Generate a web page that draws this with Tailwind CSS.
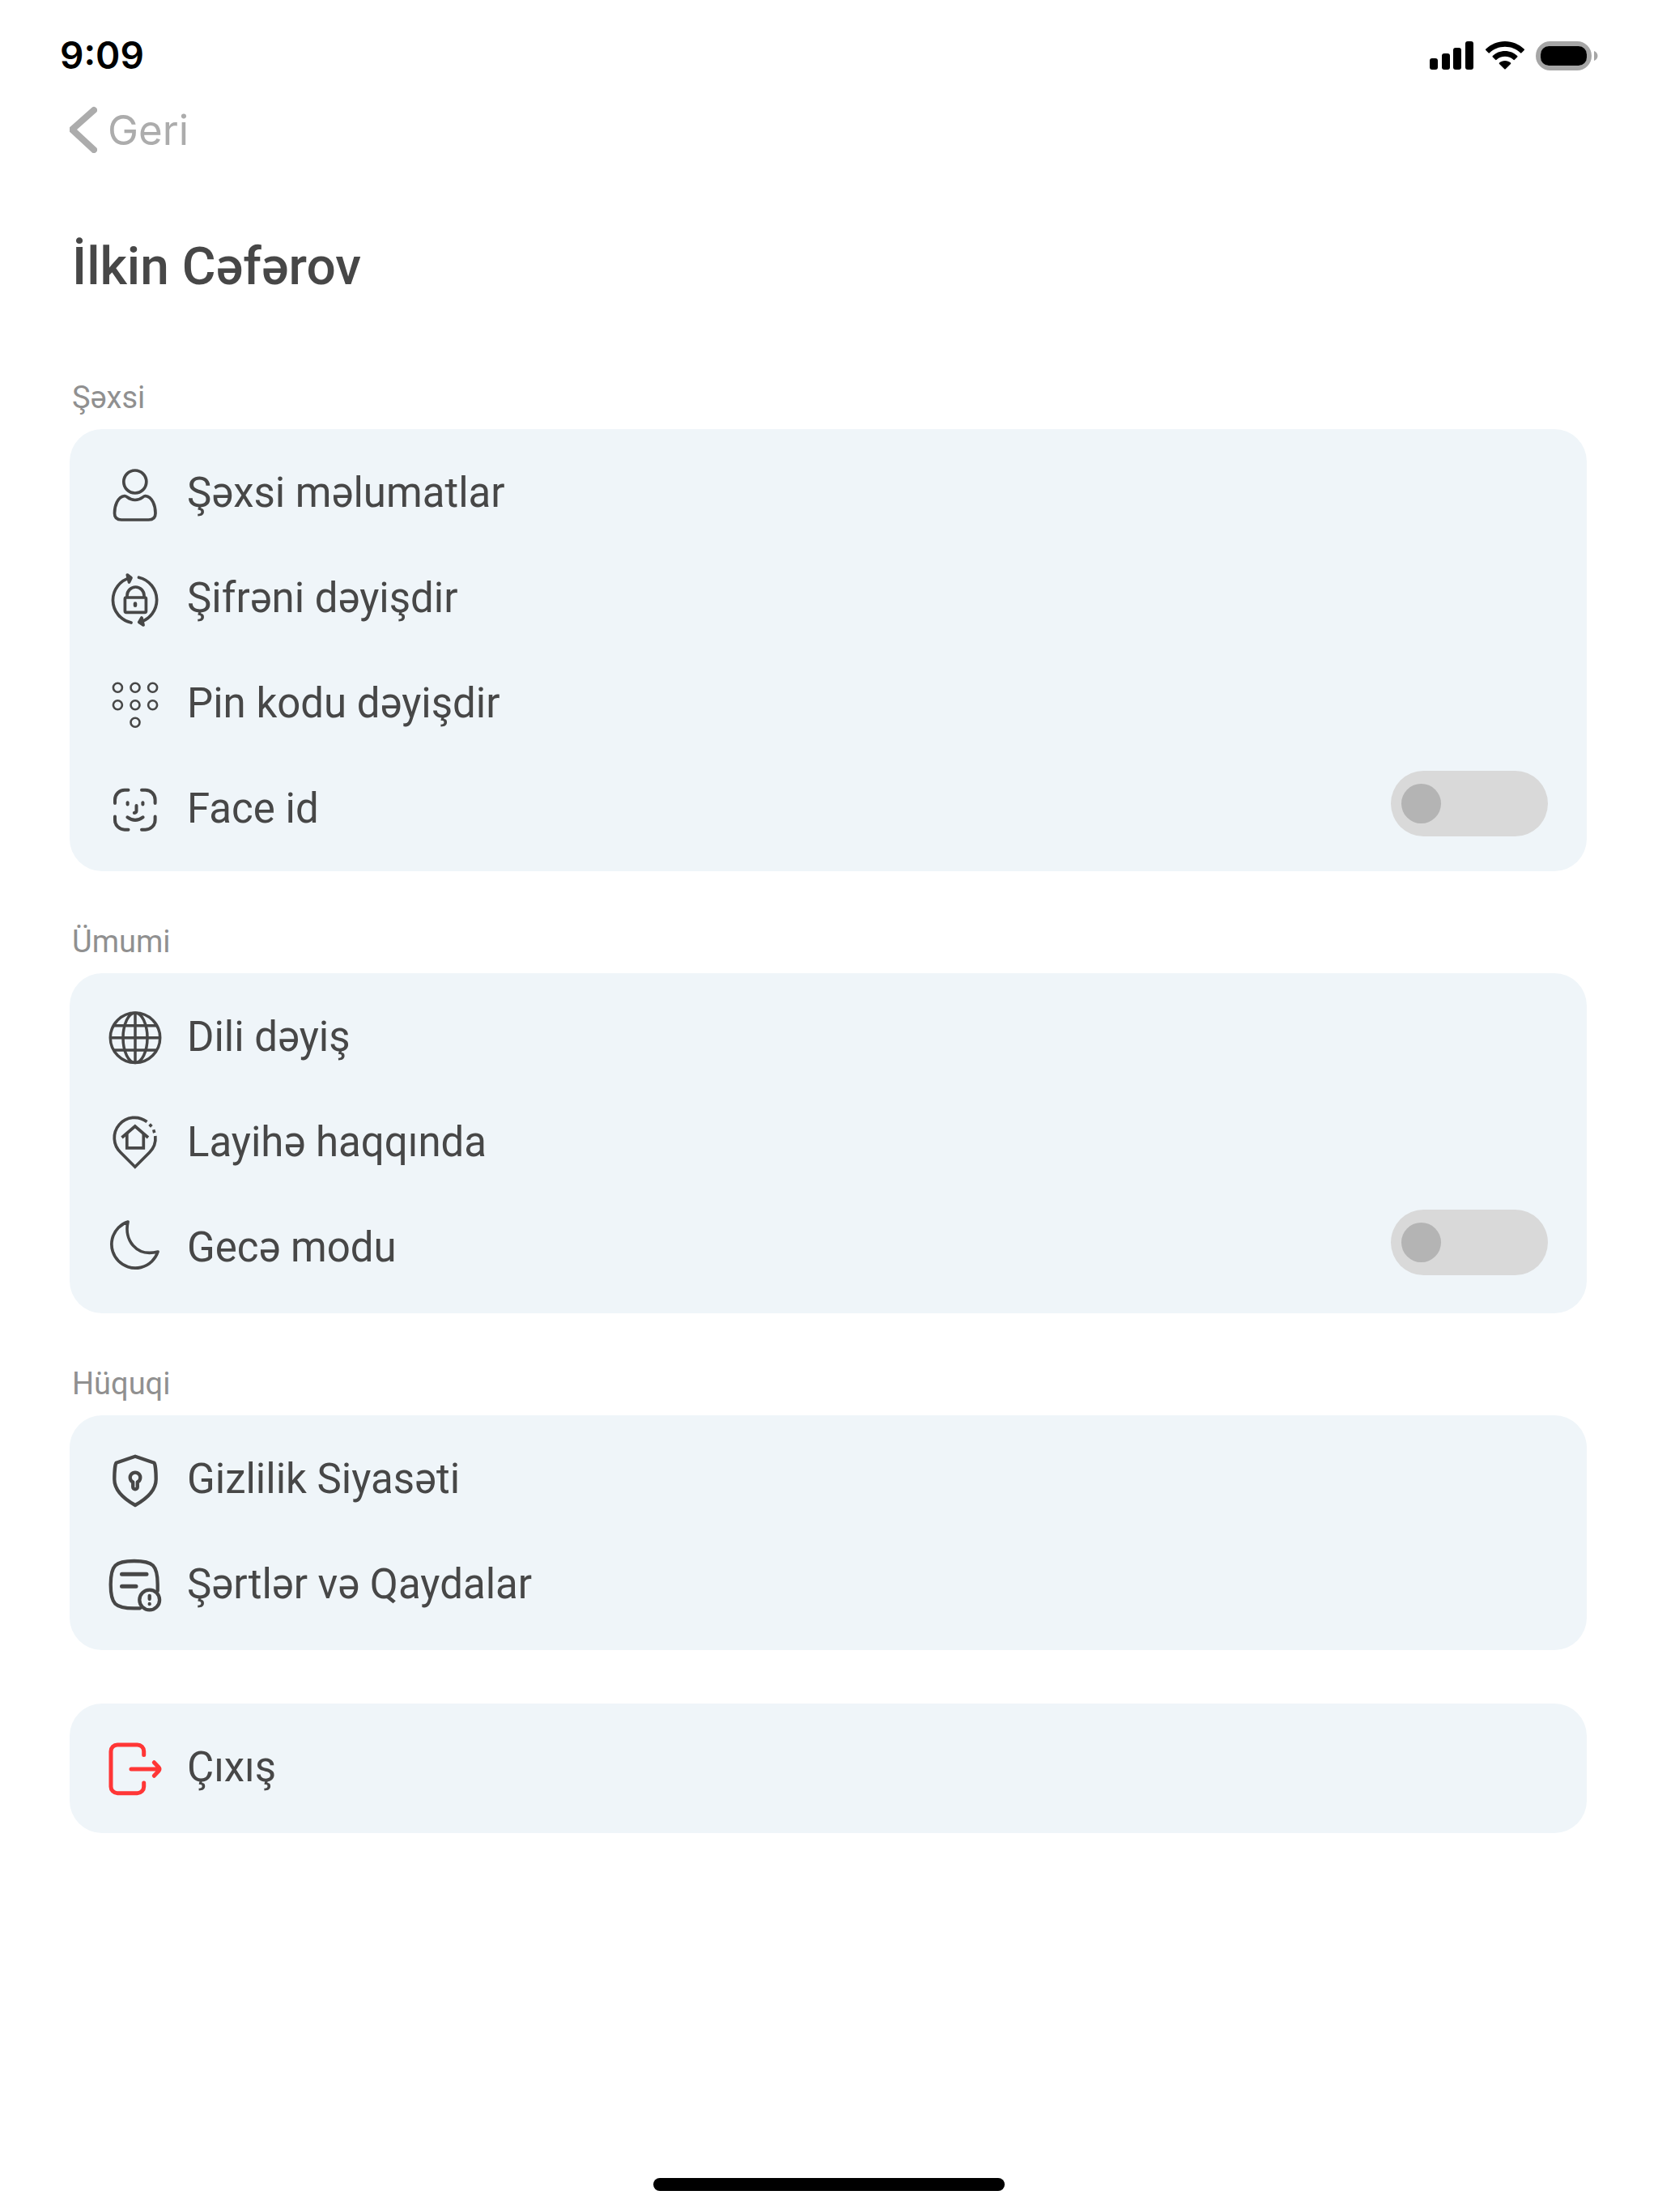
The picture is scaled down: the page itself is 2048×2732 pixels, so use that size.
<!DOCTYPE html>
<html lang="az">
<head>
    <meta charset="UTF-8">
    <meta name="viewport" content="width=device-width, initial-scale=1.0">
    <title>Profil</title>
    <script src="https://cdn.jsdelivr.net/npm/@tailwindcss/browser@4"></script>
</head>
<body class="bg-white font-[Roboto,sans-serif] text-[#474747]">
<div class="min-h-screen flex flex-col">

    <!-- Status bar -->
    <header class="h-[120px] pt-4 pl-[74px] pr-[74px] flex items-center justify-between text-black">
        <span class="font-[Inter,sans-serif] font-semibold text-[46px] leading-[56px]">9:09</span>
        <div class="flex items-center gap-[14px] pt-[2px]">
            <svg class="w-[55px] h-[36px]" viewBox="0 0 55 36" fill="currentColor">
                <rect x="0" y="21" width="10" height="14" rx="3"/>
                <rect x="15" y="15" width="10" height="20" rx="3"/>
                <rect x="29" y="8" width="10" height="27" rx="3"/>
                <rect x="44" y="0" width="10" height="35" rx="3"/>
            </svg>
            <svg class="w-[48px] h-[36px]" viewBox="0 0 48 36" fill="currentColor">
                <path d="M24 0C33 0 41.500 3.600 47.600 9.500Q48.400 10.300 47.700 11L44.500 14.300Q43.800 15 43 14.300C38 9.500 31.300 6.800 24 6.800S10 9.500 5 14.300Q4.200 15 3.500 14.300L.300 11Q-.400 10.300 .400 9.500C6.500 3.600 15 0 24 0Z"/>
                <path d="M24 12C30 12 35.300 14.300 39.200 18Q40 18.800 39.200 19.500L35.900 22.800Q35.200 23.500 34.400 22.800C31.700 20.400 28 18.800 24 18.800S16.300 20.400 13.600 22.800Q12.800 23.500 12.100 22.800L8.800 19.500Q8 18.800 8.800 18C12.700 14.300 18 12 24 12Z"/>
                <path d="M24 24C26.700 24 29.200 24.900 31 26.500Q31.700 27.200 31 27.900L24.700 34.200Q24 34.900 23.300 34.200L17 27.900Q16.300 27.200 17 26.500C18.800 24.900 21.300 24 24 24Z"/>
            </svg>
            <svg class="w-[77px] h-[36px]" viewBox="0 0 77 36">
                <rect x="3" y="3" width="63" height="30" rx="15" fill="none" stroke="#a6a6a6" stroke-width="6"/>
                <rect x="6" y="6" width="57" height="24" rx="10" fill="#000"/>
                <path d="M72 12C75 13 76.500 15.500 76.500 18S75 23 72 24Z" fill="#a6a6a6"/>
            </svg>
        </div>
    </header>

    <main class="pl-[86px] pr-[88px]">
        <a href="#" class="h-20 inline-flex items-center gap-[13px] text-[#acacac]">
            <svg class="w-[34px] h-[58px]" viewBox="0 0 34 58" fill="none" stroke="currentColor" stroke-width="8" stroke-linecap="round" stroke-linejoin="round">
                <path d="M30 5L3 29L30 54"/>
            </svg>
            <span class="pt-[2px] font-[Inter,sans-serif] text-[51px] leading-[64px]">Geri</span>
        </a>

        <h1 class="mt-[90px] ml-[3px] font-medium text-[64px] leading-[80px]">İlkin Cəfərov</h1>

        <!-- Şəxsi -->
        <section class="mt-[97px]">
            <h2 class="ml-[3px] mb-[15px] text-[38px] leading-[48px] text-[#909090]">Şəxsi</h2>
            <div class="bg-[#eff5f9] rounded-[40px] px-12 pt-[15px] pb-[11px] text-[51px] leading-[60px]">
                <a href="#" class="h-[130px] flex items-center gap-[31px]">
                    <svg class="w-[66px] h-[66px] overflow-visible" viewBox="0 0 66 66" fill="none" stroke="currentColor" stroke-width="3.700">
                        <circle cx="32.800" cy="18" r="14"/>
                        <path d="M20 35.500C11 36.500 7.500 48 7.500 57C7.500 62.500 10 65 16 65H49.500C55.500 65 58 62.500 58 57C58 48 54.500 36.500 45.500 35.500C42.500 35.500 41 40.500 32.800 40.500S23 35.500 20 35.500Z"/>
                    </svg>
                    <span class="pb-[2px]">Şəxsi məlumatlar</span>
                </a>
                <a href="#" class="h-[130px] flex items-center gap-[31px]">
                    <svg class="w-[66px] h-[66px] overflow-visible" viewBox="0 0 66 66" fill="none" stroke="currentColor" stroke-width="3.700" stroke-linecap="round" stroke-linejoin="round">
                        <path d="M28 62A28.500 28.500 0 0 1 27 6.500"/>
                        <path d="M37.500 6.200A28.500 28.500 0 0 1 38.500 61.500"/>
                        <path d="M23.300 3L28 6.800L25.500 12Z" fill="currentColor"/>
                        <path d="M43 65L37.800 61.500L41 56Z" fill="currentColor"/>
                        <rect x="20.400" y="31" width="26" height="18.300" rx="1.500"/>
                        <path d="M23 30V28.500A10.500 10.500 0 0 1 44 28.500V30"/>
                        <path d="M33 38.500V40.800" stroke-width="4.500"/>
                    </svg>
                    <span class="pb-[2px]">Şifrəni dəyişdir</span>
                </a>
                <a href="#" class="h-[130px] flex items-center gap-[31px]">
                    <svg class="w-[66px] h-[66px] overflow-visible" viewBox="0 0 66 66" fill="none" stroke="currentColor" stroke-width="2.600">
                        <circle cx="11.400" cy="12.300" r="5.500"/>
                        <circle cx="33" cy="12.300" r="5.500"/>
                        <circle cx="54.600" cy="12.300" r="5.500"/>
                        <circle cx="11.400" cy="33.700" r="5.500"/>
                        <circle cx="33" cy="33.700" r="5.500"/>
                        <circle cx="54.600" cy="33.700" r="5.500"/>
                        <circle cx="33" cy="55.300" r="5.500"/>
                    </svg>
                    <span class="pb-[2px]">Pin kodu dəyişdir</span>
                </a>
                <div class="h-[130px] flex items-center gap-[31px]">
                    <svg class="w-[66px] h-[66px] overflow-visible" viewBox="0 0 66 66" fill="none" stroke="currentColor" stroke-width="4" stroke-linecap="round" stroke-linejoin="round">
                        <path d="M24.500 8.700H20A12 12 0 0 0 8 20.700V25"/>
                        <path d="M41 8.700H45.600A12 12 0 0 1 57.600 20.700V25"/>
                        <path d="M24.500 57.700H20A12 12 0 0 1 8 45.700V41.500"/>
                        <path d="M41 57.700H45.600A12 12 0 0 0 57.600 45.700V41.500"/>
                        <path d="M23.600 24.300V26.500"/>
                        <path d="M42.400 24.300V26.500"/>
                        <path d="M34.500 28V34.500Q34.500 36.500 31.800 37"/>
                        <path d="M23.500 42.300Q33 49.500 42.500 42.300"/>
                    </svg>
                    <label for="face-id" class="flex-1 pb-[2px]">Face id</label>
                    <input id="face-id" type="checkbox" class="appearance-none mb-4 w-[194px] h-[81px] pl-[13px] flex items-center rounded-full bg-[#d9d9d9] before:block before:size-[49px] before:rounded-full before:bg-[#b4b4b4]">
                </div>
            </div>
        </section>

        <!-- Ümumi -->
        <section class="mt-[63px]">
            <h2 class="ml-[3px] mb-[15px] text-[38px] leading-[48px] text-[#909090]">Ümumi</h2>
            <div class="bg-[#eff5f9] rounded-[40px] px-12 py-[15px] text-[51px] leading-[60px]">
                <a href="#" class="h-[130px] flex items-center gap-[31px]">
                    <svg class="w-[66px] h-[66px] overflow-visible" viewBox="0 0 66 66" fill="none" stroke="currentColor" stroke-width="3.500">
                        <circle cx="33" cy="32.700" r="30.700"/>
                        <ellipse cx="33" cy="32.700" rx="15" ry="30.700"/>
                        <path d="M33 2V63.500M2.500 32.700H63.500M7 17.700H59M7 48H59"/>
                    </svg>
                    <span class="pb-[2px]">Dili dəyiş</span>
                </a>
                <a href="#" class="h-[130px] flex items-center gap-[31px]">
                    <svg class="w-[66px] h-[66px] overflow-visible" viewBox="0 0 66 66" fill="none" stroke="currentColor" stroke-width="3.700">
                        <path d="M47.500 6.500A25 25 0 0 0 15.100 44.500L32.800 62.200L50.500 44.500A25 25 0 0 0 57.800 24"/>
                        <path d="M52 8.300L54.700 11L52 13.700L49.300 11Z" fill="currentColor" stroke="none"/>
                        <path d="M54 16.800L57.300 15.800L58.500 19.600L55 20.700Z" fill="currentColor" stroke="none"/>
                        <path d="M16.500 26L32.800 12L49 26"/>
                        <path d="M22.800 21V38.800H43.300V21"/>
                    </svg>
                    <span class="pb-[2px]">Layihə haqqında</span>
                </a>
                <div class="h-[130px] flex items-center gap-[31px]">
                    <svg class="w-[66px] h-[66px] overflow-visible" viewBox="0 0 66 66" fill="none" stroke="currentColor" stroke-width="3.700" stroke-linejoin="round">
                        <path d="M24 0A29.300 29.300 0 1 0 61 37C34 44 19 22 24 0Z"/>
                    </svg>
                    <label for="gece-modu" class="flex-1 pb-[2px]">Gecə modu</label>
                    <input id="gece-modu" type="checkbox" class="appearance-none mb-4 w-[194px] h-[81px] pl-[13px] flex items-center rounded-full bg-[#d9d9d9] before:block before:size-[49px] before:rounded-full before:bg-[#b4b4b4]">
                </div>
            </div>
        </section>

        <!-- Hüquqi -->
        <section class="mt-[63px]">
            <h2 class="ml-[3px] mb-[15px] text-[38px] leading-[48px] text-[#909090]">Hüquqi</h2>
            <div class="bg-[#eff5f9] rounded-[40px] px-12 py-[15px] text-[51px] leading-[60px]">
                <a href="#" class="h-[130px] flex items-center gap-[31px]">
                    <svg class="w-[66px] h-[66px] overflow-visible" viewBox="0 0 66 66" fill="none" stroke="currentColor" stroke-width="4.300" stroke-linejoin="round">
                        <path d="M33 3.700L56.500 11.800C57.500 13 58.700 22 58.700 32C58.700 44 50 54.500 33 64C16 54.500 7.300 44 7.300 32C7.300 22 8.500 13 9.500 11.800Z"/>
                        <path d="M30.200 35.500A6.300 6.300 0 1 1 35.800 35.500V41.500A2.800 2.800 0 0 1 30.200 41.500Z"/>
                    </svg>
                    <span class="pb-[2px]">Gizlilik Siyasəti</span>
                </a>
                <a href="#" class="h-[130px] flex items-center gap-[31px]">
                    <svg class="w-[66px] h-[66px] overflow-visible" viewBox="0 0 66 66" fill="none" stroke="currentColor" stroke-width="4.300" stroke-linecap="round">
                        <path d="M60.700 40V32C60.700 8 55 3 31.700 3S2.700 8 2.700 32S8 61.300 31.700 61.300H39"/>
                        <path d="M16.500 19.300H47M16.500 34.300H34" stroke-width="5"/>
                        <circle cx="50.700" cy="51" r="12.400" fill="#eff5f9"/>
                        <path d="M50.700 45.800V50M50.700 56V56.200"/>
                    </svg>
                    <span class="pb-[2px]">Şərtlər və Qaydalar</span>
                </a>
            </div>
        </section>

        <!-- Çıxış -->
        <section class="mt-[66px] bg-[#eff5f9] rounded-[40px] px-12 py-[15px] text-[51px] leading-[60px]">
            <button type="button" class="w-full h-[130px] flex items-center gap-[31px]">
                <svg class="w-[66px] h-[66px] overflow-visible" viewBox="0 0 66 66" fill="none" stroke="#ff3636" stroke-width="5" stroke-linecap="round" stroke-linejoin="round">
                    <path d="M43.700 16.500V12A8 8 0 0 0 35.700 4H11A8 8 0 0 0 3 12V55.700A8 8 0 0 0 11 63.700H35.700A8 8 0 0 0 43.700 55.700V51"/>
                    <path d="M28 34H62M56.300 25.700L61.800 31.500Q64 34 61.800 36.500L56.300 42.300"/>
                </svg>
                <span class="pb-[2px]">Çıxış</span>
            </button>
        </section>
    </main>

    <!-- Home indicator -->
    <div class="mt-auto mb-[26px] mx-auto w-[434px] h-4 rounded-full bg-black"></div>
</div>
</body>
</html>
